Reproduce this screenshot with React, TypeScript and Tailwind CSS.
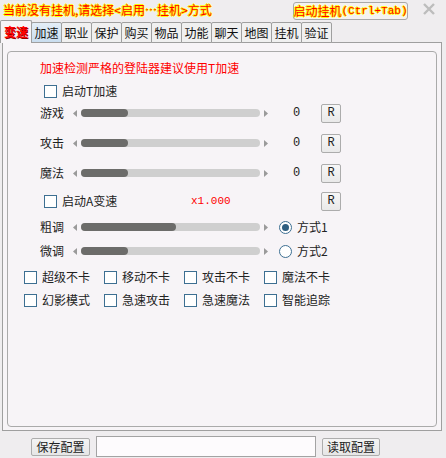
import React from "react";

const CJK = "font-['Noto_Sans_CJK_SC',sans-serif]";
const MONO = "font-['Liberation_Mono',monospace]";

function Check() {
  return <span className="inline-block w-[13px] h-[13px] border border-[#3d6f92] bg-white shrink-0" />;
}

function Radio({ on }: { on?: boolean }) {
  return (
    <span className="w-[13px] h-[13px] rounded-full border border-[#3d6f92] bg-white flex items-center justify-center shrink-0">
      {on && <span className="w-[7px] h-[7px] rounded-full bg-[#2e5e80]" />}
    </span>
  );
}

function RBtn() {
  return (
    <span className={`w-[20px] h-[19px] border border-[#acacac] rounded-[2px] bg-gradient-to-b from-[#f7f7f7] to-[#e9e9e9] flex items-center justify-center ${MONO} text-[12px] text-[#222]`}>
      R
    </span>
  );
}

function Slider({ fill }: { fill: number }) {
  return (
    <div className="flex items-center">
      <svg width="4" height="7" viewBox="0 0 4 7">
        <polygon points="4,0 0,3.5 4,7" fill="#9a9a9a" />
      </svg>
      <div className="ml-[4px] w-[179px] h-[8px] rounded-full bg-[#cfcfcf]">
        <div className="h-full rounded-full bg-[#6c6c6a]" style={{ width: fill }} />
      </div>
      <svg className="ml-[4px]" width="4" height="7" viewBox="0 0 4 7">
        <polygon points="0,0 4,3.5 0,7" fill="#9a9a9a" />
      </svg>
    </div>
  );
}

function SliderRow({ label, fill, mt, children }: { label: string; fill: number; mt: string; children?: React.ReactNode }) {
  return (
    <div className={`flex items-center h-[20px] pl-[32px] ${mt}`}>
      <span className="w-[33px] text-[12px] leading-[14px] text-[#222]">{label}</span>
      <Slider fill={fill} />
      {children}
    </div>
  );
}

const tabs = ["加速", "职业", "保护", "购买", "物品", "功能", "聊天", "地图", "挂机", "验证"];

export default function App() {
  return (
    <div className={`w-[446px] h-[458px] bg-[#efedef] overflow-hidden flex flex-col ${CJK} text-[#222]`}>
      {/* top row */}
      <div className="flex items-start h-[22px] w-[446px]">
        <span className="ml-[3px] mt-[3px] w-[220px] shrink-0 whitespace-nowrap text-[12px] leading-[14px] text-[#ff0000] [text-shadow:1px_0_0_#ffff00,-1px_0_0_#ffff00,0_1px_0_#ffff00,0_-1px_0_#ffff00]">
          当前没有挂机,请选择&lt;启用…挂机&gt;方式
        </span>
        <span className="ml-[70px] mt-[2px] w-[115px] h-[18px] shrink-0 border border-[#a8a8a8] rounded-[3px] bg-[#f5f2f0] flex items-center justify-center text-[12px] leading-[14px] text-[#ff0000] [text-shadow:1px_0_0_#ffff00,-1px_0_0_#ffff00,0_1px_0_#ffff00,0_-1px_0_#ffff00] whitespace-nowrap">
          启动挂机<span className={`${MONO} text-[11px]`}>(Ctrl+Tab)</span>
        </span>
        <span className="ml-[14px] mt-[3px] w-[14px] h-[12px] shrink-0 flex items-center justify-center">
          <svg width="14" height="12" viewBox="0 0 14 12">
            <path d="M2 1 L12 11 M12 1 L2 11" stroke="#bdbdbd" strokeWidth="2.4" />
          </svg>
        </span>
      </div>

      {/* tabs */}
      <div className="flex items-end h-[21px] relative z-10">
        <div className="w-[32px] h-[23px] -mt-[2px] border border-b-0 border-[#9f9f9f] rounded-t-[2px] bg-[#f7f4f7] flex items-center justify-center text-[12px] font-bold text-[#ff0000] [text-shadow:1px_1px_0_#900000]">
          变速
        </div>
        {tabs.map((t, i) => (
          <div
            key={t}
            className={`w-[31px] h-[21px] -ml-px border border-[#9f9f9f] rounded-t-[2px] flex items-center justify-center text-[12px] text-[#111] ${i === 0 ? "bg-gradient-to-b from-[#e4eef7] to-[#c9ddef] border-[#8fb0cc]" : "bg-[#f0f0f0]"}`}
          >
            {t}
          </div>
        ))}
      </div>

      {/* frame */}
      <div className="-mt-[1px] ml-[2px] w-[440px] h-[389px] border border-[#9f9f9f] bg-[#f7f4f7] flex flex-col">
        <div className="mt-[8px] ml-[4px] mr-[4px] mb-[3px] flex-1 border border-[#aaaaaa] rounded-[4px] flex flex-col">
          <div className="mt-[8px] h-[16px] pl-[32px] flex items-center text-[12px] leading-[14px] text-[#ff0000]">
            加速检测严格的登陆器建议使用T加速
          </div>
          <div className="mt-[6px] h-[18px] pl-[36px] flex items-center">
            <Check />
            <span className="ml-[5px] text-[12px] leading-[14px]">启动T加速</span>
          </div>
          <SliderRow label="游戏" fill={47} mt="mt-[3px]">
            <span className={`ml-[25px] w-[28px] ${MONO} text-[12px]`}>0</span>
            <RBtn />
          </SliderRow>
          <SliderRow label="攻击" fill={47} mt="mt-[10px]">
            <span className={`ml-[25px] w-[28px] ${MONO} text-[12px]`}>0</span>
            <RBtn />
          </SliderRow>
          <SliderRow label="魔法" fill={47} mt="mt-[10px]">
            <span className={`ml-[25px] w-[28px] ${MONO} text-[12px]`}>0</span>
            <RBtn />
          </SliderRow>
          <div className="mt-[8px] h-[20px] pl-[36px] flex items-center">
            <Check />
            <span className="ml-[5px] w-[129px] text-[12px] leading-[14px]">启动A变速</span>
            <span className={`w-[130px] ${MONO} text-[11px] text-[#ff0000]`}>x1.000</span>
            <RBtn />
          </div>
          <SliderRow label="粗调" fill={95} mt="mt-[6px]">
            <span className="ml-[11px]"><Radio on /></span>
            <span className="ml-[5px] text-[12px] leading-[14px]">方式1</span>
          </SliderRow>
          <SliderRow label="微调" fill={47} mt="mt-[4px]">
            <span className="ml-[11px]"><Radio /></span>
            <span className="ml-[5px] text-[12px] leading-[14px]">方式2</span>
          </SliderRow>
          <div className="mt-[7px] h-[18px] pl-[16px] flex items-center">
            {["超级不卡", "移动不卡", "攻击不卡", "魔法不卡"].map((t) => (
              <div key={t} className="w-[80px] flex items-center">
                <Check />
                <span className="ml-[5px] text-[12px] leading-[14px]">{t}</span>
              </div>
            ))}
          </div>
          <div className="mt-[5px] h-[18px] pl-[16px] flex items-center">
            {["幻影模式", "急速攻击", "急速魔法", "智能追踪"].map((t) => (
              <div key={t} className="w-[80px] flex items-center">
                <Check />
                <span className="ml-[5px] text-[12px] leading-[14px]">{t}</span>
              </div>
            ))}
          </div>
        </div>
      </div>

      {/* bottom bar */}
      <div className="pt-[5px] pl-[31px] flex items-center">
        <span className="w-[59px] h-[18px] border border-[#adadad] rounded-[2px] bg-gradient-to-b from-[#f4f4f4] to-[#e6e6e6] flex items-center justify-center text-[12px] leading-[14px]">
          保存配置
        </span>
        <span className="ml-[6px] w-[220px] h-[21px] border border-[#a3a3a3] bg-[#fdfbfd]" />
        <span className="ml-[6px] w-[58px] h-[18px] border border-[#adadad] rounded-[2px] bg-gradient-to-b from-[#f4f4f4] to-[#e6e6e6] flex items-center justify-center text-[12px] leading-[14px]">
          读取配置
        </span>
      </div>
    </div>
  );
}
